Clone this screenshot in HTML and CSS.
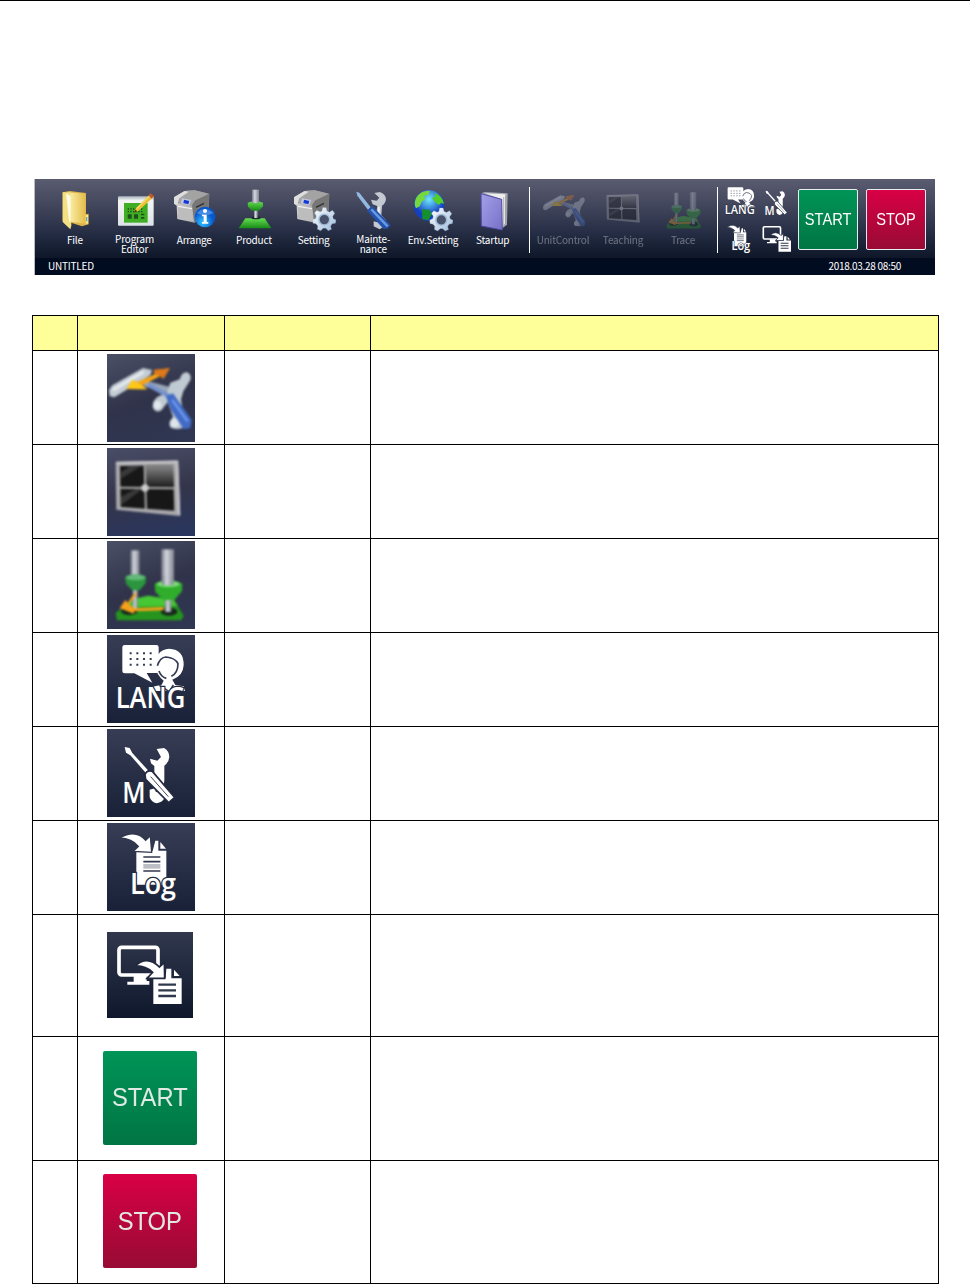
FILE: index.html
```html
<!DOCTYPE html>
<html lang="en">

<head>
    <meta charset="UTF-8">
    <meta name="viewport" content="width=device-width, initial-scale=1.0">
    <title>Main menu</title>
    <link rel="stylesheet" href="styles.css">
</head>

<body>
    <!-- shared icons -->
    <svg class="defs" width="0" height="0">
        <defs>
            <linearGradient id="g-folder"><stop offset="0" stop-color="#fff3b0"/><stop offset="1" stop-color="#e3bd4c"/></linearGradient>
            <linearGradient id="g-metal"><stop offset="0" stop-color="#777b86"/><stop offset=".4" stop-color="#d3d6df"/><stop offset="1" stop-color="#81858f"/></linearGradient>
            <linearGradient id="g-green" x2="0" y2="1"><stop offset="0" stop-color="#65dc50"/><stop offset="1" stop-color="#168a17"/></linearGradient>
            <linearGradient id="g-printer"><stop offset="0" stop-color="#d8d8d8"/><stop offset="1" stop-color="#858585"/></linearGradient>
            <linearGradient id="g-gear" x2="1" y2="1"><stop offset="0" stop-color="#fff"/><stop offset="1" stop-color="#9dbbdc"/></linearGradient>
            <linearGradient id="g-book" x2="1" y2="1"><stop offset="0" stop-color="#a4a0e8"/><stop offset="1" stop-color="#7771c7"/></linearGradient>
            <radialGradient id="g-info" cx=".4" cy=".75"><stop offset="0" stop-color="#35c8ff"/><stop offset="1" stop-color="#0757cf"/></radialGradient>
            <radialGradient id="g-globe" cx=".5" cy=".3"><stop offset="0" stop-color="#6fe9ff"/><stop offset="1" stop-color="#143fc0"/></radialGradient>
            <linearGradient id="g-pane" x2="0" y2="1"><stop offset="0" stop-color="#888"/><stop offset="1" stop-color="#1b1b1b"/></linearGradient>
            <linearGradient id="g-paper" x2="0" y2="1"><stop offset="0" stop-color="#aab5be"/><stop offset=".15" stop-color="#f4f6f5"/><stop offset="1" stop-color="#dce3e6"/></linearGradient>
        </defs>

        <symbol id="printer" viewBox="0 0 120 120">
            <path d="M0 25L32 6L62 4L106 14L104 65L62 101L10 90L8 50L0 44Z" fill="url(#g-printer)"/>
            <path d="M0 25L32 6L62 4L104 14L62 37L52 52L8 42Z" fill="#a3a3a3"/>
            <path d="M0 25L32 6L44 8L16 28L10 46L0 44Z" fill="#dedede"/>
            <path d="M54 48L64 34L105 15L104 65L61 101Z" fill="#777"/>
            <path d="M12 50L54 57L58 97L12 88Z" fill="#bdbdbd"/>
            <path d="M12 52L54 59" stroke="#eee" stroke-width="4"/>
            <path d="M24 28L52 33L46 50L20 43Z" fill="#c5c8d8"/>
            <path d="M30 32L46 36L43 46L28 42Z" fill="#123bd8"/>
            <path d="M66 55L90 43" stroke="#303030" stroke-width="4"/>
        </symbol>

        <symbol id="gear" viewBox="0 0 80 80">
            <path d="M34 2H46L49 13L57 17L67 11L75 21L68 31L70 39L79 43L77 54L66 56L61 64L64 74L53 79L45 71L36 71L28 79L17 74L18 63L12 56L2 54L1 42L11 38L13 30L7 20L15 11L26 16L32 13Z" fill="url(#g-gear)" stroke="#7e94ae" stroke-width="1"/>
            <circle cx="40" cy="42" r="18" fill="#48536b" stroke="#a5bdd8" stroke-width="5"/>
        </symbol>

        <symbol id="unit" viewBox="0 0 264 264">
            <path d="M6 108L16 94L108 42L135 48L130 64L22 130L8 126Z" fill="#c3ccd5"/>
            <path d="M18 108L110 54" stroke="#e8edf0" stroke-width="8"/>
            <path d="M112 88L205 112" stroke="#9aa7b7" stroke-width="18"/>
            <path d="M222 66Q230 52 244 56Q256 66 248 82L229 112L222 136L230 190L232 216Q222 230 194 222Q184 216 190 202L198 188L182 144L164 168Q148 180 138 162Q134 142 152 128L180 116L190 86L218 76Z" fill="#c0cad2"/>
            <circle cx="151" cy="153" r="12" fill="#e1e7eb"/>
            <circle cx="202" cy="207" r="14" fill="#dde4ea"/>
            <path d="M123 91L188 128" stroke="#7793ce" stroke-width="13"/>
            <path d="M176 126L198 118L254 198L250 222L230 226L192 168Z" fill="#436bc5"/>
            <path d="M196 138L242 202" stroke="#6f9cf0" stroke-width="7"/>
            <path d="M58 105L76 78L91 84L143 61L140 48L188 43L169 74L160 66L106 94L120 106Z" fill="#f5a516"/>
            <path d="M58 105L76 78L104 94L120 106Z" fill="#ffc819"/>
            <path d="M143 61L140 48L188 43L169 74L160 66Z" fill="#df7819"/>
        </symbol>

        <symbol id="teach" viewBox="0 0 264 264">
            <path d="M26 42L213 38L220 204L28 185Z" fill="#aaa9ad"/>
            <path d="M28 44L211 40L217 200" fill="none" stroke="#d3d3d5" stroke-width="5"/>
            <path d="M39 54L198 52L202 188L41 177Z" fill="#171717"/>
            <path d="M116 53L198 52L201 118L116 117Z" fill="url(#g-pane)"/>
            <path d="M42 92L100 56L68 55L42 72ZM42 172L106 124L86 123L42 146Z" fill="#383838"/>
            <path d="M113 52L117 188M38 119L202 121" stroke="#aaa" stroke-width="6"/>
            <circle cx="114" cy="120" r="11" fill="#ccc"/>
        </symbol>

        <symbol id="trace" viewBox="0 0 264 264">
            <path d="M26 216L80 174L124 164L202 178L230 225L222 238L30 238Z" fill="#25951e"/>
            <path d="M80 174L124 164L200 177L212 194L58 198Z" fill="#46c834"/>
            <ellipse cx="67" cy="210" rx="25" ry="12" fill="#15261c"/>
            <ellipse cx="186" cy="212" rx="25" ry="12" fill="#15261c"/>
            <rect x="71" y="28" width="26" height="86" fill="url(#g-metal)"/>
            <rect x="77" y="138" width="15" height="70" fill="url(#g-metal)"/>
            <path d="M54 107Q84 94 117 107L116 126L98 148H76L57 128Z" fill="#2b963d"/>
            <ellipse cx="86" cy="109" rx="29" ry="9" fill="#62b979"/>
            <rect x="163" y="25" width="38" height="104" fill="url(#g-metal)"/>
            <rect x="174" y="168" width="19" height="45" fill="url(#g-metal)"/>
            <path d="M143 128Q184 108 226 128L225 150L202 177H168L145 152Z" fill="#2fad2b"/>
            <ellipse cx="184" cy="129" rx="35" ry="10" fill="#7ed978"/>
            <rect x="165" y="104" width="34" height="28" fill="url(#g-metal)"/>
            <path d="M91 158L66 190L82 202L170 198V208L82 211L80 218L38 202L55 177L62 185L82 157Z" fill="#f5a21b"/>
        </symbol>

        <symbol id="lang" viewBox="0 0 264 264">
            <path d="M53 30H148Q155 30 155 37V107Q155 114 148 114H119L136 143L82 115H53Q46 115 46 108V37Q46 30 53 30Z" fill="#fff"/>
            <path d="M68 55H136M68 72H136M68 89H136" stroke="#343b53" stroke-width="6" stroke-dasharray="6 14"/>
            <path d="M145 94Q144 44 187 41Q231 43 230 91Q228 124 196 134L205 150L230 154L234 168H132L137 155L164 149L170 137Q148 120 145 94Z" fill="#fff"/>
            <path d="M151 92Q159 67 177 66Q204 68 213 86Q213 113 193 124M156 108Q162 126 178 130M157 151L187 170L199 150" fill="none" stroke="#343b53" stroke-width="5"/>
            <text class="glyph-text outlined" x="26" y="218" font-size="86" textLength="209" lengthAdjust="spacingAndGlyphs">LANG</text>
        </symbol>

        <symbol id="maint" viewBox="0 0 264 264">
            <path d="M149 60L171 57Q186 65 187 84Q186 99 172 110V155L168 181L174 205Q166 221 149 223Q132 219 128 204V182L143 178L147 190L158 184L153 174L142 163V111L132 103L129 89L151 95L162 84Z" fill="#fff"/>
            <path d="M53 54L68 57L76 72L123 124L116 131L70 79L57 71Z" fill="#fff"/>
            <path d="M114 137Q120 122 136 127L203 205L185 221L116 151Z" fill="#fff" stroke="#242b41" stroke-width="5"/>
            <path d="M131 143L184 203" stroke="#434a5d" stroke-width="3"/>
            <text class="glyph-text" x="46" y="223" font-size="84" textLength="70" lengthAdjust="spacingAndGlyphs">M</text>
        </symbol>

        <symbol id="log" viewBox="0 0 264 264">
            <path d="M93 84H137L145 53H154V83H178V185H88V84Z" fill="#fff"/>
            <path d="M160 57L177 77H160Z" fill="#fff"/>
            <path d="M38 45Q86 16 116 52L130 38L134 88L79 85L94 70Q75 47 38 45Z" fill="#fff" stroke="#30364d" stroke-width="4"/>
            <path d="M109 102H160M109 116H160M109 144H160" stroke="#30364d" stroke-width="5"/>
            <path d="M109 123H160V137H109Z" fill="#bcbec5"/>
            <text class="glyph-text outlined" x="69" y="213" font-size="88" textLength="138" lengthAdjust="spacingAndGlyphs">Log</text>
        </symbol>

        <symbol id="monitor" viewBox="0 0 258 258">
            <rect x="36" y="46" width="117" height="83" rx="8" fill="none" stroke="#fff" stroke-width="11"/>
            <path d="M80 130H119V147H127V158H61V149H80Z" fill="#fff"/>
            <path d="M139 139H176L178 110H193V139H224V216H139Z" fill="#fff"/>
            <path d="M201 113L218 132H201Z" fill="#fff"/>
            <path d="M84 102Q121 68 157 105L172 92L173 139H120L137 121Q114 100 84 102Z" fill="#fff" stroke="#20283d" stroke-width="5"/>
            <path d="M154 158H207M154 175H207M154 192H207" stroke="#30384b" stroke-width="7"/>
        </symbol>
    </svg>

    <div class="toolbar">
        <div class="menu">
            <ul class="items">
                <li>
                    <svg class="icon" viewBox="0 0 120 120">
                        <path d="M23 10L44 6L93 12V75L101 74V106L81 112L32 96L23 96Z" fill="#dcb349"/>
                        <path d="M38 10L91 14V104L46 98Z" fill="url(#g-folder)"/>
                        <path d="M29 10L47 12L49 110L46 121L23 99V10Z" fill="#f5df83"/>
                        <path d="M33 12L47 22V94L43 101" fill="#fffbe5"/>
                        <path d="M92 78H99V104H92Z" fill="#ffe985"/>
                        <rect x="93" y="84" width="4" height="13" fill="#62a8d5"/>
                    </svg>
                    <span>File</span>
                </li>
                <li>
                    <svg class="icon" viewBox="0 0 120 120">
                        <rect x="9" y="22" width="107" height="88" rx="3" fill="url(#g-paper)"/>
                        <rect x="27" y="42" width="71" height="59" fill="#3fae24"/>
                        <path d="M38 60H86M38 68H86" stroke="#174e13" stroke-width="4" stroke-dasharray="4 4"/>
                        <path d="M38 76H50V89H38ZM57 76H69V89H57ZM78 74H88V79H78ZM78 84H88V89H78Z" fill="#1d531b"/>
                        <path d="M56 72L63 57L106 15L116 23L71 65Z" fill="#eebf34"/>
                        <path d="M65 59L105 20" stroke="#ffed8a" stroke-width="3"/>
                        <path d="M100 19L107 13L117 21L110 29Z" fill="#b85b35"/>
                        <path d="M56 72L61 62L67 67Z" fill="#4a3217"/>
                    </svg>
                    <span class="two">Program<br>Editor</span>
                </li>
                <li>
                    <svg class="icon" viewBox="0 0 120 120">
                        <use href="#printer" width="120" height="120"/>
                        <circle cx="93" cy="84" r="31" fill="url(#g-info)"/>
                        <path d="M68 73Q90 47 118 72Q95 86 68 73Z" fill="#6aa7ed" opacity=".6"/>
                        <circle cx="93" cy="66" r="6" fill="#fff"/>
                        <path d="M84 77H98V99H103V104H84V99H89V82H84Z" fill="#fff"/>
                    </svg>
                    <span>Arrange</span>
                </li>
                <li>
                    <svg class="icon" viewBox="0 0 120 120">
                        <path d="M34 88H92L112 118H14Z" fill="url(#g-green)"/>
                        <ellipse cx="66" cy="86" rx="14" ry="5" fill="#222b33"/>
                        <rect x="60" y="58" width="11" height="29" fill="url(#g-metal)"/>
                        <path d="M41 41Q65 33 87 41V52L75 65H54L42 53Z" fill="url(#g-green)"/>
                        <rect x="54" y="2" width="21" height="40" fill="url(#g-metal)"/>
                    </svg>
                    <span>Product</span>
                </li>
                <li>
                    <svg class="icon" viewBox="0 0 120 120">
                        <use href="#printer" width="120" height="120"/>
                        <use href="#gear" x="55" y="50" width="72" height="80"/>
                    </svg>
                    <span>Setting</span>
                </li>
                <li>
                    <svg class="icon" viewBox="0 0 120 120">
                        <path d="M64 12L80 9Q96 14 99 29Q98 43 87 50L85 79L98 93L95 111L80 121L62 112V97L73 100L78 91L69 79L73 51L59 46L54 32L71 35L79 26Z" fill="#c3c9d1"/>
                        <path d="M78 53L76 94" stroke="#eef1f4" stroke-width="5"/>
                        <path d="M10 8L19 11L53 55L45 62L13 20Z" fill="#93b9e3"/>
                        <path d="M42 65L58 51L113 109L103 119L91 119Z" fill="#2353ad"/>
                        <path d="M55 61L104 112" stroke="#6b99e6" stroke-width="7"/>
                    </svg>
                    <span class="two">Mainte-<br>nance</span>
                </li>
                <li>
                    <svg class="icon" viewBox="0 0 120 120">
                        <circle cx="48" cy="50" r="46" fill="url(#g-globe)"/>
                        <path d="M11 24Q24 5 50 5L47 17L32 21L38 30L26 38L20 52L9 58Q0 43 11 24Z" fill="#75d83c"/>
                        <path d="M65 12Q90 22 93 45L84 41L78 48L66 39L57 27L67 23Z" fill="#53cd27"/>
                        <path d="M27 61L49 62L57 75L46 94L28 90Z" fill="#15912c"/>
                        <use href="#gear" x="49" y="52" width="72" height="78"/>
                    </svg>
                    <span>Env.Setting</span>
                </li>
                <li>
                    <svg class="icon" viewBox="0 0 120 120">
                        <path d="M26 12L36 9L104 13L102 107L86 119Z" fill="#a6a6b1"/>
                        <path d="M36 13L97 16L96 104L86 114V31Z" fill="#eee"/>
                        <path d="M92 24V109M98 20V105" stroke="#999" stroke-width="2"/>
                        <path d="M24 14L86 31L88 123L25 111Z" fill="url(#g-book)" stroke="#504aa4" stroke-width="3"/>
                    </svg>
                    <span>Startup</span>
                </li>
            </ul>
            <ul class="items disabled">
                <li><svg class="icon"><use href="#unit"/></svg><span>UnitControl</span></li>
                <li><svg class="icon"><use href="#teach"/></svg><span>Teaching</span></li>
                <li><svg class="icon"><use href="#trace"/></svg><span>Trace</span></li>
            </ul>
            <div class="tools">
                <svg><use href="#lang"/></svg>
                <svg><use href="#maint"/></svg>
                <svg class="tool-log"><use href="#log"/></svg>
                <svg><use href="#monitor"/></svg>
            </div>
            <div class="btn start"><span>START</span></div>
            <div class="btn stop"><span>STOP</span></div>
        </div>
        <div class="status">
            <span class="name">UNTITLED</span>
            <span class="date">2018.03.28 08:50</span>
        </div>
    </div>

    <table class="list">
        <colgroup>
            <col class="col-no">
            <col class="col-icon">
            <col class="col-name">
            <col>
        </colgroup>
        <tr class="head"><th></th><th></th><th></th><th></th></tr>
        <tr><td></td><td><svg class="pic photo"><use href="#unit"/></svg></td><td></td><td></td></tr>
        <tr><td></td><td><svg class="pic photo photo-blue"><use href="#teach"/></svg></td><td></td><td></td></tr>
        <tr><td></td><td><svg class="pic photo up"><use href="#trace"/></svg></td><td></td><td></td></tr>
        <tr><td></td><td><svg class="pic up"><use href="#lang"/></svg></td><td></td><td></td></tr>
        <tr><td></td><td><svg class="pic up"><use href="#maint"/></svg></td><td></td><td></td></tr>
        <tr><td></td><td><svg class="pic up"><use href="#log"/></svg></td><td></td><td></td></tr>
        <tr class="row-monitor"><td></td><td><svg class="pic pic-monitor"><use href="#monitor"/></svg></td><td></td><td></td></tr>
        <tr class="row-start"><td></td><td><div class="btn big start"><span>START</span></div></td><td></td><td></td></tr>
        <tr class="row-stop"><td></td><td><div class="btn big stop"><span>STOP</span></div></td><td></td><td></td></tr>
    </table>
</body>

</html>
```

FILE: styles.css
```css
* {
    margin: 0;
    padding: 0;
    box-sizing: border-box;
}

body {
    height: 1284px;
    padding: 178px 0 0 32px;
    border-top: 1px solid #000;
    background-color: #fff;
    font-family: "Liberation Sans", Arial, sans-serif;
    overflow: hidden;
}

ul {
    list-style: none;
}

svg {
    display: block;
}

.defs {
    position: absolute;
}

/* toolbar */
.toolbar {
    width: 901px;
    height: 96px;
    margin-left: 2px;
    border-left: 1px solid #b9bac4;
    color: #fff;
    font-family: "Noto Sans CJK JP", sans-serif;
    font-size: 10px;
}

.menu {
    display: flex;
    height: 79px;
    padding-left: 10px;
    background: linear-gradient(#5a5c70, #41455b 35%, #242c43 70%, #0e1628);
}

.items {
    display: flex;
    width: 485px;
    height: 66px;
    margin-top: 8px;
    border-right: 1px solid #fff;
}

.items li {
    display: flex;
    flex-direction: column;
    align-items: center;
    width: 59.7px;
    padding-top: 2px;
}

.icon {
    width: 40px;
    height: 40px;
    overflow: visible;
}

.items span {
    margin-top: 6px;
    line-height: 10px;
    text-align: center;
    white-space: nowrap;
    letter-spacing: -.2px;
}

.items .two {
    margin-top: 5px;
}

.disabled {
    width: 188px;
    padding-left: 3px;
}

.disabled li {
    width: 60px;
    padding-top: 1px;
    opacity: .35;
}

.disabled .icon {
    width: 45px;
    height: 45px;
    margin-left: 2px;
}

.disabled span {
    margin-top: 2px;
}

.tools {
    display: grid;
    grid-template-columns: 37px 37px;
    grid-template-rows: 37px 37px;
    margin: 4px 3px 0;
}

.tools svg {
    width: 38px;
    height: 38px;
}

.tools .tool-log {
    width: 36px;
    margin-left: 1px;
}

.glyph-text {
    fill: #fff;
    font-family: "Open Sans", sans-serif;
    font-weight: 600;
}

.outlined {
    stroke: #252c42;
    stroke-width: 8px;
    paint-order: stroke;
}

.status {
    display: flex;
    justify-content: space-between;
    height: 17px;
    padding: 0 34px 0 13px;
    background-color: #020c20;
    line-height: 16px;
}

.name {
    letter-spacing: -.2px;
}

.date {
    letter-spacing: -.3px;
}

/* start / stop buttons */
.btn {
    display: flex;
    justify-content: center;
    align-items: center;
    width: 60px;
    height: 61px;
    margin: 10px 8px 0 0;
    border: 1px solid #e8edf0;
    border-radius: 2px;
    color: #fff;
    font-family: "Liberation Sans", Arial, sans-serif;
    font-size: 17px;
}

.btn span {
    transform: scaleX(.86);
}

.start {
    background: linear-gradient(#009457, #007544);
}

.stop {
    background: linear-gradient(#d90045, #970b34);
}

.big {
    width: 94px;
    height: 94px;
    margin: 0 0 2px 25px;
    border: none;
    color: #e1e9e5;
    font-size: 25px;
}

.big span {
    transform: scaleX(.95);
}

/* list */
.list {
    width: 907px;
    margin-top: 40px;
    border: 1px solid #000;
    border-width: 1px 0 0 1px;
    border-spacing: 0;
    table-layout: fixed;
}

.list th,
.list td {
    height: 94px;
    border: 1px solid #000;
    border-width: 0 1px 1px 0;
    vertical-align: middle;
}

.list .head th {
    height: 35px;
    background-color: #ffff99;
}

.list .row-monitor td {
    height: 122px;
}

.list .row-start td {
    height: 124px;
}

.list .row-stop td {
    height: 123px;
}

.col-no {
    width: 45px;
}

.col-icon {
    width: 147px;
}

.col-name {
    width: 146px;
}

.pic {
    width: 88px;
    height: 88px;
    margin: 0 auto;
    background: linear-gradient(#373d55, #182137);
}

.up {
    margin-bottom: 2px;
}

.photo {
    background: linear-gradient(160deg, #4b5066, #30334a 50%, #2f3753);
}

.photo-blue {
    background: linear-gradient(170deg, #494d66, #34354a 50%, #283660);
}

.photo use {
    filter: blur(.8px);
}

.pic-monitor {
    width: 86px;
    height: 86px;
    margin: 0 0 2px 29px;
    background: linear-gradient(#31384d, #0e172c);
}
```
